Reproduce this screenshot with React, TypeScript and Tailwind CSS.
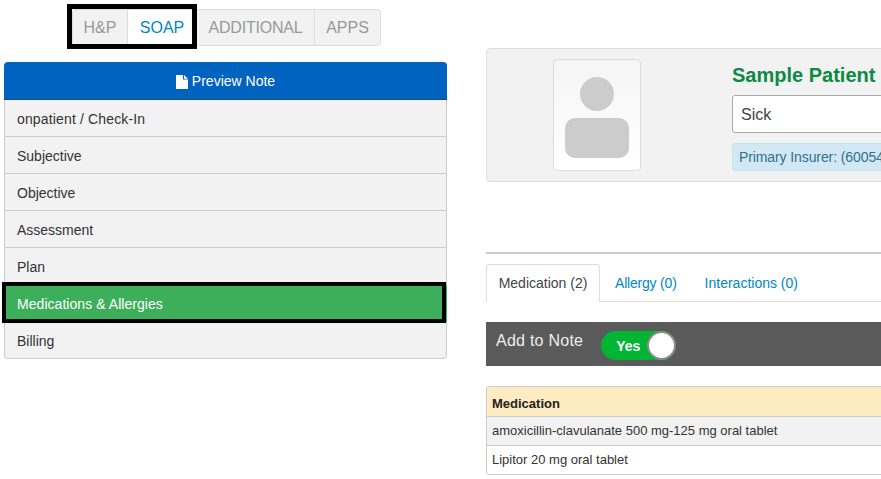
export default function App() {
  const items = ["onpatient / Check-In", "Subjective", "Objective", "Assessment", "Plan"];
  return (
    <div className="w-[881px] h-[479px] overflow-hidden bg-white flex font-['Liberation_Sans',Arial,sans-serif] text-[14px] text-[#333]">
      <div className="w-[443px] ml-1 shrink-0 flex flex-col">
        <div className="ml-[68px] mt-[9px] mb-4 relative flex w-[309px] h-[37px] text-[16px] text-[#999] bg-[#f2f2f2] border border-[#ddd] rounded">
          <div className="w-[55px] flex items-center justify-center border-r border-[#ddd]">H&amp;P</div>
          <div className="w-[69px] flex items-center justify-center bg-white text-[#0088c4] border-r border-[#ddd]">SOAP</div>
          <div className="w-[118px] flex items-center justify-center border-r border-[#ddd] tracking-[-0.2px]">ADDITIONAL</div>
          <div className="flex-1 flex items-center justify-center">APPS</div>
          <div className="absolute -left-[6px] -top-[6px] w-[130px] h-[45px] border-[5px] border-black"></div>
        </div>
        <div className="h-[38px] pt-[2px] bg-[#0063c0] rounded-t flex items-center justify-center gap-1 text-white border-b border-[#0a4f94]">
          <svg width="12" height="14" viewBox="0 0 12 14" fill="white">
            <path d="M0 0H7V4.5H12V14H0Z" />
            <path d="M8 0L12 3.7H8Z" />
          </svg>
          <span>Preview Note</span>
        </div>
        <div className="border-x border-b border-[#ccc] rounded-b bg-[#f2f2f2]">
          {items.map((t, i) => (
            <div key={t} className={i === 0 ? "h-[37px] pl-3 pt-[2px] flex items-center border-b border-[#ccc] tracking-[0.15px]" : "h-[37px] pl-3 pt-[2px] flex items-center border-b border-[#ccc]"}>{t}</div>
          ))}
          <div className="relative h-[37px] -mx-px pl-[13px] pt-[2px] flex items-center bg-[#3dae5a] text-white tracking-[0.05px]">
            Medications &amp; Allergies
            <div className="absolute -left-[2px] right-[1px] -top-[3px] -bottom-[1px] border-4 border-black"></div>
          </div>
          <div className="h-[32px] mt-1 pl-3 pb-[1px] flex items-center">Billing</div>
        </div>
      </div>
      <div className="ml-[39px] w-[600px] shrink-0 flex flex-col">
        <div className="mt-12 h-[134px] bg-[#f2f2f2] border border-[#ddd] rounded-sm flex">
          <div className="ml-[66px] mt-[10px] w-[88px] h-[112px] bg-gradient-to-b from-[#f5f5f5] to-white border border-[#ddd] rounded-sm flex flex-col items-center">
            <div className="mt-[17px] w-[34px] h-[34px] rounded-full bg-[#ccc]"></div>
            <div className="mt-[7px] w-[64px] h-[40px] rounded-[10px] bg-[#ccc]"></div>
          </div>
          <div className="ml-[91px] flex-1 flex flex-col">
            <div className="mt-[12px] h-[28px] text-[20px] leading-[28px] font-bold text-[#0a8a43]">Sample Patient</div>
            <div className="mt-[6px] h-[38px] pt-[2px] bg-white border border-[#aaa] rounded-[3px] pl-2 flex items-center text-[16px] text-[#444]">Sick</div>
            <div className="mt-[10px] h-[28px] bg-[#d2e9f5] border border-[#bce8f1] rounded-[3px] pl-[6px] flex items-center text-[#31708f] tracking-[-0.1px]">Primary Insurer: (600543)</div>
          </div>
        </div>
        <div className="mt-[70px] h-[2px] bg-[#ccc]"></div>
        <div className="mt-[10px] h-[38px] flex border-b border-[#ddd]">
          <div className="w-[114px] h-[38px] bg-white border border-[#ddd] border-b-0 rounded-t flex items-center justify-center text-[#444]">Medication (2)</div>
          <div className="ml-[15px] pt-[2px] flex items-center text-[#0088c4] tracking-[-0.2px]">Allergy (0)</div>
          <div className="ml-[28px] pt-[2px] flex items-center text-[#0088c4]">Interactions (0)</div>
        </div>
        <div className="mt-5 h-[44px] bg-[#5a5a5a] flex items-start pl-[10px]">
          <span className="mt-[10px] text-[16px] leading-[18px] text-[#eee] tracking-[0.25px]">Add to Note</span>
          <div className="ml-[18px] mt-[9px] relative w-[75px] h-[29px] rounded-full bg-[#00b533] flex items-center pl-[15px] pt-[1px] text-white font-bold">
            Yes
            <div className="absolute right-0 top-0 w-[29px] h-[29px] rounded-full bg-white border-2 border-[#8a8a8a]"></div>
          </div>
        </div>
        <div className="mt-5 h-[89px] border border-[#ccc] rounded-[3px] overflow-hidden text-[13px]">
          <div className="h-[30px] pt-[4px] bg-[#fdebc1] border-b border-[#ccc] pl-[5px] flex items-center font-bold text-[#222]">Medication</div>
          <div className="h-[29px] bg-[#f2f2f2] border-b border-[#ccc] pl-[5px] flex items-center">amoxicillin-clavulanate 500 mg-125 mg oral tablet</div>
          <div className="h-[28px] pl-[5px] flex items-center">Lipitor 20 mg oral tablet</div>
        </div>
      </div>
    </div>
  );
}
